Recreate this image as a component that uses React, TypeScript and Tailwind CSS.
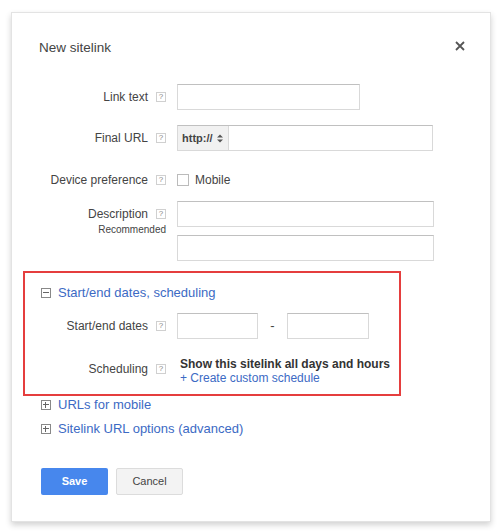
import * as React from "react";

const font = { fontFamily: '"Liberation Sans", Arial, sans-serif' };

const Help = () => (
  <span className="inline-flex h-[10px] w-[10px] shrink-0 items-center justify-center border border-[#d0d0d0] text-[8px] leading-none text-[#888]">
    ?
  </span>
);

const Box = ({ w }: { w: string }) => (
  <div className={`h-[26px] border border-[#d9d9d9] border-t-[#c0c0c0] bg-white ${w}`} />
);

const Row = ({
  label,
  sub,
  width,
  children,
  className,
}: {
  label: string;
  sub?: string;
  width: string;
  children: React.ReactNode;
  className?: string;
}) => (
  <div className={`flex items-start gap-[11px] ${className ?? ""}`}>
    <div className={`flex shrink-0 flex-col items-end ${width}`}>
      <div className="flex h-[26px] items-center gap-[8px]">
        <span className="text-[12px] text-[#444]">{label}</span>
        <Help />
      </div>
      {sub && <span className="-mt-[5px] text-[10px] text-[#444]">{sub}</span>}
    </div>
    {children}
  </div>
);

const Toggle = ({ open }: { open?: boolean }) => (
  <span className="relative inline-block h-[10px] w-[10px] shrink-0 border border-[#888]">
    <span className="absolute left-[1px] right-[1px] top-[3px] h-px bg-[#666]" />
    {!open && (
      <span className="absolute bottom-[1px] top-[1px] left-[3px] w-px bg-[#666]" />
    )}
  </span>
);

export default function App() {
  return (
    <div className="h-[531px] w-[503px] bg-white pl-[11px] pt-[12px]" style={font}>
      <div className="relative h-[510px] w-[480px] border border-[#e3e3e3] bg-white pl-[27px] pt-[26px] shadow-[0_3px_6px_rgba(0,0,0,0.18)]">
        <div className="flex h-[18px] items-center justify-between pr-[24px]">
          <h1 className="text-[13.5px] text-[#444]">New sitelink</h1>
          <svg width="10" height="10" viewBox="0 0 10 10" className="-mt-[5px] mr-[1px]">
            <path d="M1 1L9 9M9 1L1 9" stroke="#555" strokeWidth="1.8" />
          </svg>
        </div>

        <div className="mt-[27px] flex flex-col">
          <Row label="Link text" width="w-[127px]">
            <Box w="w-[183px]" />
          </Row>

          <Row label="Final URL" width="w-[127px]" className="mt-[15px]">
            <div className="flex h-[26px] w-[256px] border border-[#d9d9d9] border-t-[#c0c0c0]">
              <div className="flex w-[51px] items-center gap-[4px] border-r border-[#d9d9d9] bg-[#f1f1f1] pl-[4px] text-[11px] font-bold text-[#444]">
                http://
                <svg width="6" height="9" viewBox="0 0 6 9">
                  <path d="M0 3.5L3 0.5L6 3.5ZM0 5.5L3 8.5L6 5.5Z" fill="#555" />
                </svg>
              </div>
              <div className="flex-1 bg-white" />
            </div>
          </Row>

          <Row label="Device preference" width="w-[127px]" className="mt-[16px]">
            <div className="flex h-[26px] items-center gap-[6px]">
              <span className="h-[12px] w-[12px] border border-[#bbb] bg-white" />
              <span className="text-[12px] text-[#444]">Mobile</span>
            </div>
          </Row>

          <Row
            label="Description"
            sub="Recommended"
            width="w-[127px]"
            className="mt-[8px]"
          >
            <div className="flex flex-col gap-[8px]">
              <Box w="w-[257px]" />
              <Box w="w-[257px]" />
            </div>
          </Row>
        </div>

        <div className="-ml-[16px] mt-[10px] h-[125px] w-[378px] border-2 border-[#e53e3e] pl-[16px] pt-[10px]">
          <div className="flex items-center gap-[7px]">
            <Toggle open />
            <span className="text-[13px] text-[#3c6ac4]">Start/end dates, scheduling</span>
          </div>
          <Row label="Start/end dates" width="w-[125px]" className="mt-[10px]">
            <div className="flex items-center">
              <Box w="w-[81px]" />
              <span className="w-[29px] text-center text-[13px] text-[#444]">-</span>
              <Box w="w-[82px]" />
            </div>
          </Row>
          <Row label="Scheduling" width="w-[125px]" className="mt-[17px]">
            <div className="flex flex-col pl-[3px] pt-[1px] leading-[14px]">
              <span className="text-[12px] font-bold text-[#333]">
                Show this sitelink all days and hours
              </span>
              <span className="text-[12px] text-[#3c6ac4]">+ Create custom schedule</span>
            </div>
          </Row>
        </div>

        <div className="mt-[1px] flex flex-col gap-[8px]">
          <div className="flex h-[16px] items-center gap-[7px] pl-[2px]">
            <Toggle />
            <span className="text-[13px] text-[#3c6ac4]">URLs for mobile</span>
          </div>
          <div className="flex h-[16px] items-center gap-[7px] pl-[2px]">
            <Toggle />
            <span className="text-[13px] text-[#3c6ac4]">Sitelink URL options (advanced)</span>
          </div>
        </div>

        <div className="mt-[31px] flex gap-[8px] pl-[2px]">
          <button className="h-[27px] w-[67px] rounded-[2px] bg-[#4787ed] text-[11px] font-bold text-white">
            Save
          </button>
          <button className="h-[27px] w-[67px] rounded-[2px] border border-[#dcdcdc] bg-[#f3f3f3] text-[11px] text-[#444]">
            Cancel
          </button>
        </div>
      </div>
    </div>
  );
}
